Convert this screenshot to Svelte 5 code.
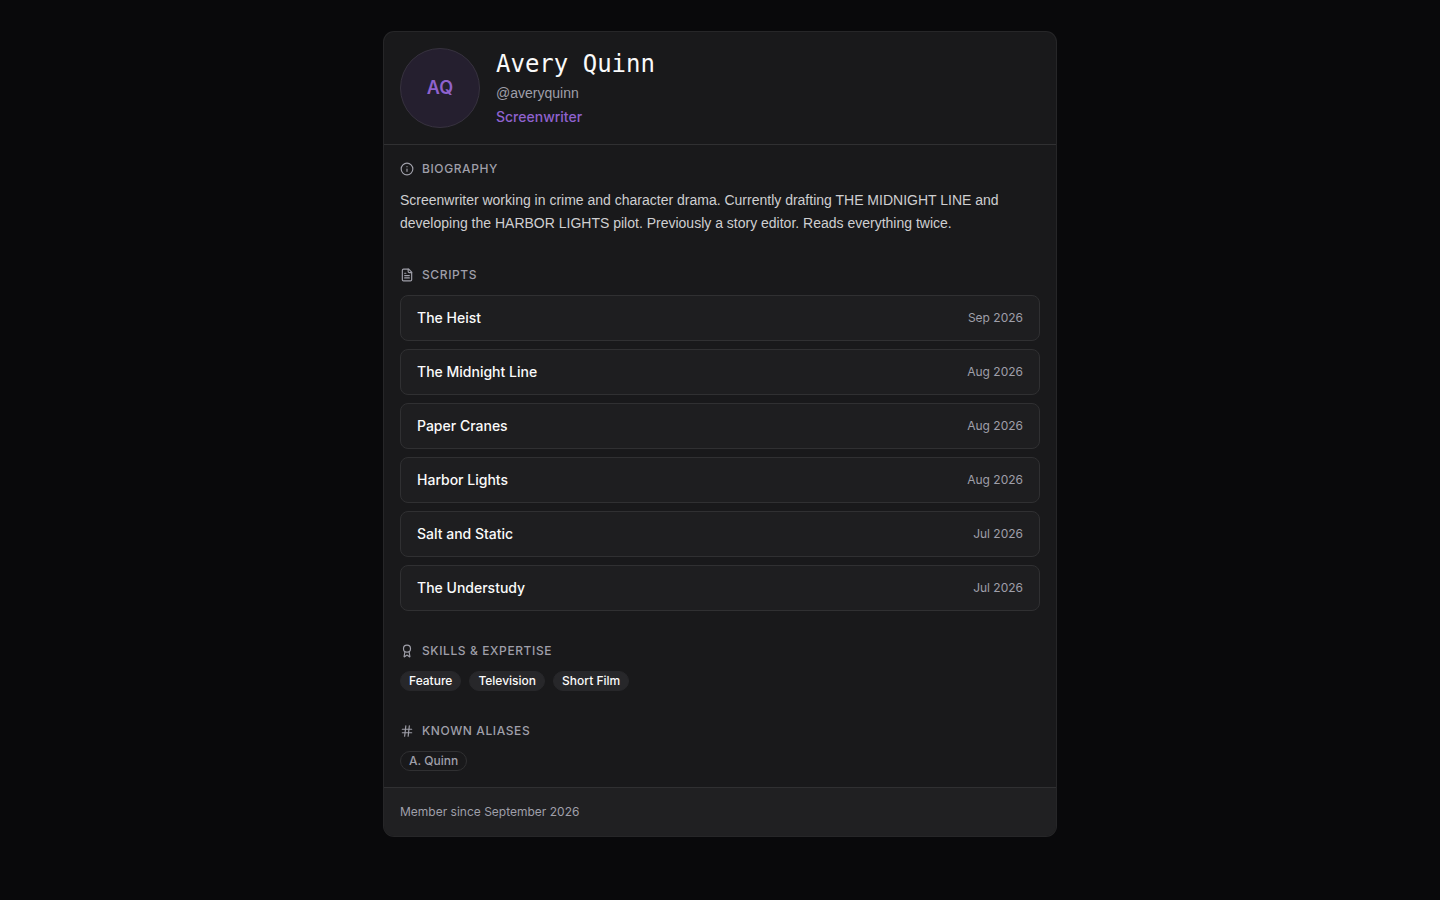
<script>
  const profile = {
    name: 'Avery Quinn',
    initials: 'AQ',
    handle: '@averyquinn',
    role: 'Screenwriter',
    bio: 'Screenwriter working in crime and character drama. Currently drafting THE MIDNIGHT LINE and developing the HARBOR LIGHTS pilot. Previously a story editor. Reads everything twice.',
    memberSince: 'September 2026'
  };

  const scripts = [
    { title: 'The Heist', date: 'Sep 2026' },
    { title: 'The Midnight Line', date: 'Aug 2026' },
    { title: 'Paper Cranes', date: 'Aug 2026' },
    { title: 'Harbor Lights', date: 'Aug 2026' },
    { title: 'Salt and Static', date: 'Jul 2026' },
    { title: 'The Understudy', date: 'Jul 2026' }
  ];

  const skills = ['Feature', 'Television', 'Short Film'];
  const aliases = ['A. Quinn'];
</script>

<main>
  <article class="card">
    <header>
      <div class="avatar">{profile.initials}</div>
      <div class="identity">
        <h1>{profile.name}</h1>
        <p class="handle">{profile.handle}</p>
        <p class="role">{profile.role}</p>
      </div>
    </header>

    <div class="content">
      <section>
        <h2>
          <svg viewBox="0 0 24 24" aria-hidden="true">
            <circle cx="12" cy="12" r="10" />
            <path d="M12 16v-4" />
            <path d="M12 8h.01" />
          </svg>
          Biography
        </h2>
        <p class="bio">{profile.bio}</p>
      </section>

      <section>
        <h2>
          <svg viewBox="0 0 24 24" aria-hidden="true">
            <path d="M15 2H6a2 2 0 0 0-2 2v16a2 2 0 0 0 2 2h12a2 2 0 0 0 2-2V7Z" />
            <path d="M14 2v4a2 2 0 0 0 2 2h4" />
            <path d="M10 9H8" />
            <path d="M16 13H8" />
            <path d="M16 17H8" />
          </svg>
          Scripts
        </h2>
        <ul class="scripts">
          {#each scripts as script}
            <li>
              <span class="title">{script.title}</span>
              <span class="date">{script.date}</span>
            </li>
          {/each}
        </ul>
      </section>

      <section>
        <h2>
          <svg viewBox="0 0 24 24" aria-hidden="true">
            <path d="m15.477 12.89 1.515 8.526a.5.5 0 0 1-.81.47l-3.58-2.687a1 1 0 0 0-1.197 0l-3.586 2.686a.5.5 0 0 1-.81-.469l1.514-8.526" />
            <circle cx="12" cy="8" r="6" />
          </svg>
          Skills &amp; Expertise
        </h2>
        <div class="badges">
          {#each skills as skill}
            <span class="badge filled">{skill}</span>
          {/each}
        </div>
      </section>

      <section>
        <h2>
          <svg viewBox="0 0 24 24" aria-hidden="true">
            <path d="M4 9h16" />
            <path d="M4 15h16" />
            <path d="M10 3 8 21" />
            <path d="M16 3l-2 18" />
          </svg>
          Known Aliases
        </h2>
        <div class="badges">
          {#each aliases as alias}
            <span class="badge outline">{alias}</span>
          {/each}
        </div>
      </section>
    </div>

    <footer>Member since {profile.memberSince}</footer>
  </article>
</main>

<style>
  :global(body) {
    background: #09090b;
    color: #fafafa;
    font-family: Inter, 'Liberation Sans', sans-serif;
    -webkit-font-smoothing: antialiased;
  }

  main {
    padding: 32px 16px;
  }

  h1,
  h2,
  p,
  ul {
    margin: 0;
    padding: 0;
  }

  .card {
    max-width: 672px;
    margin: 0 auto;
    overflow: hidden;
    border-radius: 10px;
    background: #19191b;
    box-shadow: 0 0 0 1px #262628;
    font-size: 14px;
    line-height: 20px;
  }

  header {
    display: flex;
    align-items: center;
    gap: 16px;
    padding: 16px;
    border-bottom: 1px solid #303032;
  }

  .avatar {
    display: flex;
    align-items: center;
    justify-content: center;
    box-sizing: border-box;
    width: 80px;
    height: 80px;
    flex-shrink: 0;
    border: 1px solid #37323f;
    border-radius: 50%;
    background: #251f2f;
    color: #8f62ce;
    font-size: 18px;
    font-weight: 600;
  }

  .identity {
    display: flex;
    flex-direction: column;
    gap: 4px;
  }

  h1 {
    font-family: 'DejaVu Sans Mono', monospace;
    font-size: 24px;
    font-weight: 400;
    line-height: 30px;
  }

  .handle,
  .bio {
    font-family: 'Liberation Sans', sans-serif;
  }

  .handle {
    color: #9f9fa9;
  }

  .role {
    color: #8f62ce;
    font-weight: 500;
  }

  .content {
    display: flex;
    flex-direction: column;
    gap: 32px;
    padding: 16px;
  }

  section {
    display: flex;
    flex-direction: column;
    gap: 12px;
  }

  h2 {
    display: flex;
    align-items: center;
    gap: 8px;
    color: #9f9fa9;
    font-size: 12px;
    font-weight: 500;
    line-height: 16px;
    letter-spacing: 0.05em;
    text-transform: uppercase;
  }

  svg {
    width: 14px;
    height: 14px;
    fill: none;
    stroke: currentColor;
    stroke-width: 2;
    stroke-linecap: round;
    stroke-linejoin: round;
  }

  .bio {
    color: #cfcfd1;
    line-height: 23px;
  }

  .scripts {
    display: flex;
    flex-direction: column;
    gap: 8px;
    list-style: none;
  }

  .scripts li {
    display: flex;
    align-items: center;
    justify-content: space-between;
    gap: 16px;
    padding: 12px 16px;
    border: 1px solid #303032;
    border-radius: 8px;
    background: #1e1e20;
  }

  .title {
    font-weight: 500;
  }

  .date {
    color: #9f9fa9;
    font-size: 12px;
    line-height: 16px;
  }

  .badges {
    display: flex;
    flex-wrap: wrap;
    gap: 8px;
  }

  .badge {
    padding: 1px 8px;
    border: 1px solid transparent;
    border-radius: 10px;
    font-size: 12px;
    font-weight: 500;
    line-height: 16px;
  }

  .filled {
    border-color: #27272a;
    background: #27272a;
  }

  .outline {
    border-color: #303032;
    color: #9f9fa9;
  }

  footer {
    padding: 16px;
    border-top: 1px solid #303032;
    background: #202022;
    color: #9f9fa9;
    font-size: 12px;
    line-height: 16px;
  }
</style>
